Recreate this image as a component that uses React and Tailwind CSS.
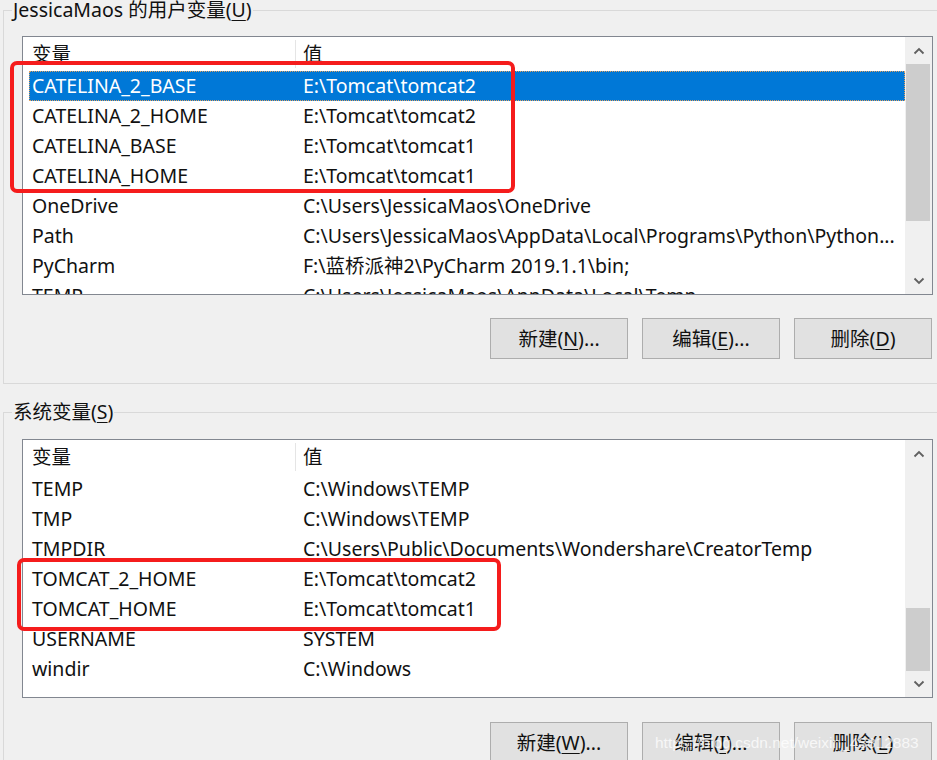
import React from 'react';

const userVars = [
  ['CATELINA_2_BASE', 'E:\\Tomcat\\tomcat2'],
  ['CATELINA_2_HOME', 'E:\\Tomcat\\tomcat2'],
  ['CATELINA_BASE', 'E:\\Tomcat\\tomcat1'],
  ['CATELINA_HOME', 'E:\\Tomcat\\tomcat1'],
  ['OneDrive', 'C:\\Users\\JessicaMaos\\OneDrive'],
  ['Path', 'C:\\Users\\JessicaMaos\\AppData\\Local\\Programs\\Python\\Python...'],
  ['PyCharm', 'F:\\蓝桥派神2\\PyCharm 2019.1.1\\bin;'],
  ['TEMP', 'C:\\Users\\JessicaMaos\\AppData\\Local\\Temp'],
];

const sysVars = [
  ['TEMP', 'C:\\Windows\\TEMP'],
  ['TMP', 'C:\\Windows\\TEMP'],
  ['TMPDIR', 'C:\\Users\\Public\\Documents\\Wondershare\\CreatorTemp'],
  ['TOMCAT_2_HOME', 'E:\\Tomcat\\tomcat2'],
  ['TOMCAT_HOME', 'E:\\Tomcat\\tomcat1'],
  ['USERNAME', 'SYSTEM'],
  ['windir', 'C:\\Windows'],
];

const font = { fontFamily: '"Noto Sans", "Noto Sans CJK SC", sans-serif' };

const Chevron = ({ up }) => (
  <svg width="12" height="8" viewBox="0 0 12 8" className="block">
    <polyline
      points={up ? '1.5,6.5 6,2 10.5,6.5' : '1.5,1.5 6,6 10.5,1.5'}
      fill="none"
      stroke="#606060"
      strokeWidth="1.8"
    />
  </svg>
);

const ScrollBar = ({ thumbTop, thumbHeight }) => (
  <div className="relative w-[27px] shrink-0 bg-[#f0f0f0] flex flex-col">
    <div className="h-[27px] flex items-center justify-center">
      <Chevron up />
    </div>
    <div className="flex-1 relative">
      <div
        className="absolute left-[1px] right-[2px] bg-[#cdcdcd]"
        style={{ top: thumbTop, height: thumbHeight }}
      />
    </div>
    <div className="h-[27px] flex items-center justify-center">
      <Chevron />
    </div>
  </div>
);

const Row = ({ name, value, selected }) => (
  <div
    className={`h-[30px] ml-[6px] flex items-center ${
      selected ? 'bg-[#0078d7] text-white outline outline-1 outline-dotted outline-[#e0a060] -outline-offset-1' : 'text-[#111]'
    }`}
  >
    <div className="w-[274px] pl-[3px] shrink-0 whitespace-nowrap">{name}</div>
    <div className="whitespace-nowrap overflow-hidden">{value}</div>
  </div>
);

const ListBox = ({ rows, selectedIndex, thumbTop, thumbHeight }) => (
  <div className="w-[911px] h-[259px] border border-[#828790] bg-white flex">
    <div className="flex-1 overflow-hidden">
      <div className="h-[34px] ml-[6px] flex items-center text-[#111]">
        <div className="w-[266px] pl-[3px]">变量</div>
        <div className="w-[1px] h-[28px] bg-[#e5e5e5] mr-[7px]" />
        <div>值</div>
      </div>
      {rows.map(([n, v], i) => (
        <Row key={n + i} name={n} value={v} selected={i === selectedIndex} />
      ))}
    </div>
    <ScrollBar thumbTop={thumbTop} thumbHeight={thumbHeight} />
  </div>
);

const Btn = ({ pre, k, post }) => (
  <div className="w-[138px] h-[41px] border border-[#adadad] bg-[#e1e1e1] flex items-center justify-center text-[#111]">
    {pre}(<span className="underline underline-offset-[3px]">{k}</span>){post}
  </div>
);

const Group = ({ label, children, className }) => (
  <div className={`ml-[3px] w-[960px] border border-r-0 border-[#d9d9d9] pl-[18px] ${className}`}>
    <div className="-mt-[12px] -ml-[10px] w-fit bg-[#f0f0f0] px-[1px] h-[22px] leading-[22px] text-[#111]">
      {label}
    </div>
    {children}
  </div>
);

export default function App() {
  return (
    <div
      className="relative w-[937px] h-[760px] overflow-hidden bg-[#f0f0f0] text-[19.5px]"
      style={font}
    >
      <Group label={<>JessicaMaos 的用户变量(<span className="underline underline-offset-[3px]">U</span>)</>} className="mt-[10px] pb-[24px]">
        <div className="mt-[15px]">
          <ListBox rows={userVars} selectedIndex={0} thumbTop={0} thumbHeight={157} />
        </div>
        <div className="w-[910px] mt-[23px] flex justify-end gap-[14px]">
          <Btn pre="新建" k="N" post="..." />
          <Btn pre="编辑" k="E" post="..." />
          <Btn pre="删除" k="D" post="" />
        </div>
      </Group>

      <Group label={<>系统变量(<span className="underline underline-offset-[3px]">S</span>)</>} className="mt-[28px] pb-[24px]">
        <div className="mt-[16px]">
          <ListBox rows={sysVars} selectedIndex={-1} thumbTop={141} thumbHeight={63} />
        </div>
        <div className="w-[910px] mt-[24px] flex justify-end gap-[14px]">
          <Btn pre="新建" k="W" post="..." />
          <Btn pre="编辑" k="I" post="..." />
          <Btn pre="删除" k="L" post="" />
        </div>
      </Group>

      {/* annotation boxes */}
      <div className="absolute left-[10px] top-[61px] w-[505px] h-[132px] border-[4px] border-[#f51c1c] rounded-[7px]" />
      <div className="absolute left-[17px] top-[558px] w-[484px] h-[73px] border-[4px] border-[#f51c1c] rounded-[7px]" />

      {/* watermark */}
      <div
        className="absolute left-[655px] top-[731px] text-[15.5px] text-white/75 whitespace-nowrap"
        style={{ fontFamily: '"Liberation Sans", sans-serif' }}
      >
        https://blog.csdn.net/weixin_43812883
      </div>
    </div>
  );
}
